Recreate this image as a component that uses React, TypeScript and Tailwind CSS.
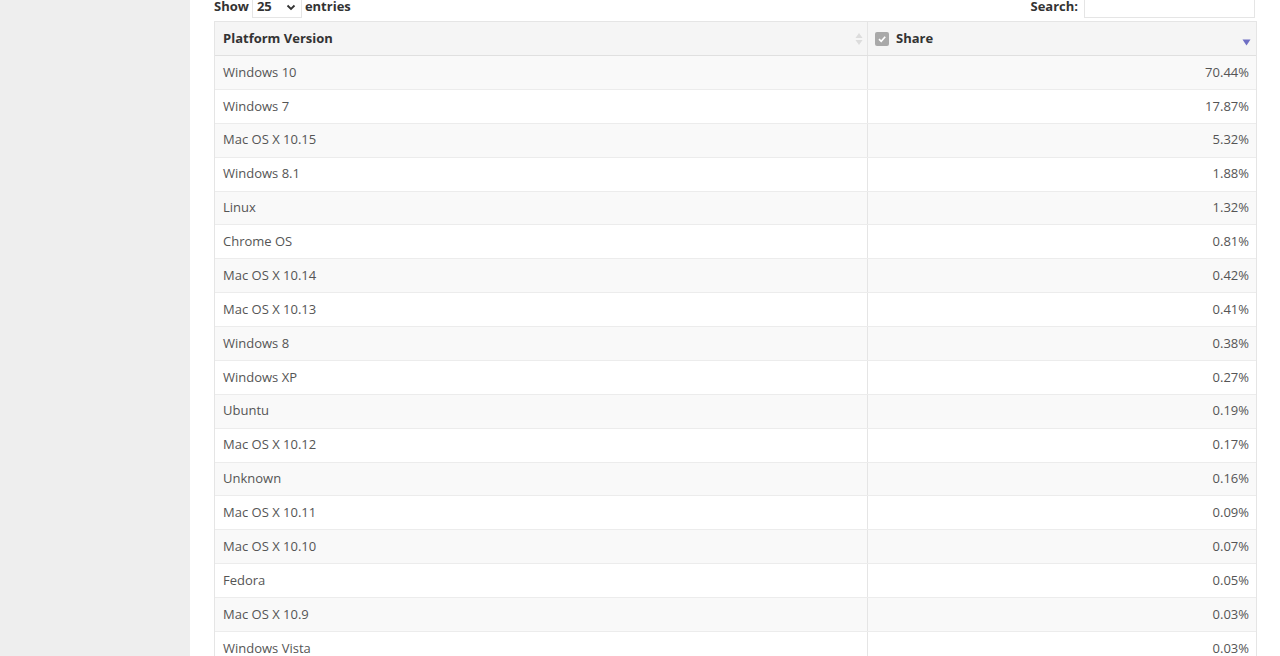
import React from "react";

const rows: [string, string][] = [
  ["Windows 10", "70.44%"],
  ["Windows 7", "17.87%"],
  ["Mac OS X 10.15", "5.32%"],
  ["Windows 8.1", "1.88%"],
  ["Linux", "1.32%"],
  ["Chrome OS", "0.81%"],
  ["Mac OS X 10.14", "0.42%"],
  ["Mac OS X 10.13", "0.41%"],
  ["Windows 8", "0.38%"],
  ["Windows XP", "0.27%"],
  ["Ubuntu", "0.19%"],
  ["Mac OS X 10.12", "0.17%"],
  ["Unknown", "0.16%"],
  ["Mac OS X 10.11", "0.09%"],
  ["Mac OS X 10.10", "0.07%"],
  ["Fedora", "0.05%"],
  ["Mac OS X 10.9", "0.03%"],
  ["Windows Vista", "0.03%"],
  ["Mac OS X 10.8", "0.02%"],
];

export default function App() {
  return (
    <div
      className="flex h-[656px] w-[1280px] overflow-hidden bg-white text-[13px] text-[#555]"
      style={{ fontFamily: '"Open Sans", "Noto Sans", Arial, sans-serif' }}
    >
      <div className="w-[190px] shrink-0 bg-[#eeeeee]" />
      <div className="flex-1 pl-[24px] pr-[23px]">
        <div className="-mt-[4px] flex h-[25px] items-start justify-between">
          <div className="flex items-center gap-[3px] font-bold text-[#333]">
            <span>Show</span>
            <div className="flex h-[22px] w-[50px] items-center justify-between border border-[#e5e5e5] bg-white px-[4px] text-[#333]">
              <span>25</span>
              <svg width="10" height="8" viewBox="0 0 10 8" className="mr-[1px]">
                <path d="M1.5 2.5 L5 6 L8.5 2.5" stroke="#333" strokeWidth="1.8" fill="none" />
              </svg>
            </div>
            <span>entries</span>
          </div>
          <div className="mr-[2px] flex items-center gap-[6px] font-bold text-[#333]">
            <span>Search:</span>
            <div className="h-[22px] w-[171px] border border-[#e5e5e5] bg-white" />
          </div>
        </div>
        <div className="border border-[#e5e5e5]">
          <div className="flex h-[34px] border-b border-[#e0e0e0] bg-[#f5f5f5] font-bold text-[#333]">
            <div className="flex w-[653px] items-center justify-between border-r border-[#e5e5e5] pl-[8px] pr-[4px]">
              <span>Platform Version</span>
              <svg width="8" height="16" viewBox="0 0 8 16">
                <path d="M4 2 L7.5 7 L0.5 7 Z" fill="#dcdcdc" />
                <path d="M4 14 L7.5 9 L0.5 9 Z" fill="#dcdcdc" />
              </svg>
            </div>
            <div className="relative flex flex-1 items-center pl-[7px]">
              <span className="mr-[7px] flex h-[14px] w-[14px] items-center justify-center rounded-[2px] bg-[#a9a9a9]">
                <svg width="10" height="10" viewBox="0 0 10 10">
                  <path d="M2 5.2 L4.2 7.3 L8.2 2.8" stroke="white" strokeWidth="1.7" fill="none" />
                </svg>
              </span>
              <span>Share</span>
              <svg width="9" height="7" viewBox="0 0 9 7" className="absolute bottom-[9px] right-[5px]">
                <path d="M0.5 0.5 L8.5 0.5 L4.5 6.5 Z" fill="#6f6fc4" />
              </svg>
            </div>
          </div>
          {rows.map(([name, share], i) => (
            <div
              key={name}
              className={`flex h-[33.88px] border-b border-[#ececec] ${i % 2 === 0 ? "bg-[#f9f9f9]" : "bg-white"}`}
            >
              <div className="flex w-[653px] items-center border-r border-[#e5e5e5] pl-[8px]">{name}</div>
              <div className="flex flex-1 items-center justify-end pr-[7px]">{share}</div>
            </div>
          ))}
        </div>
      </div>
    </div>
  );
}
